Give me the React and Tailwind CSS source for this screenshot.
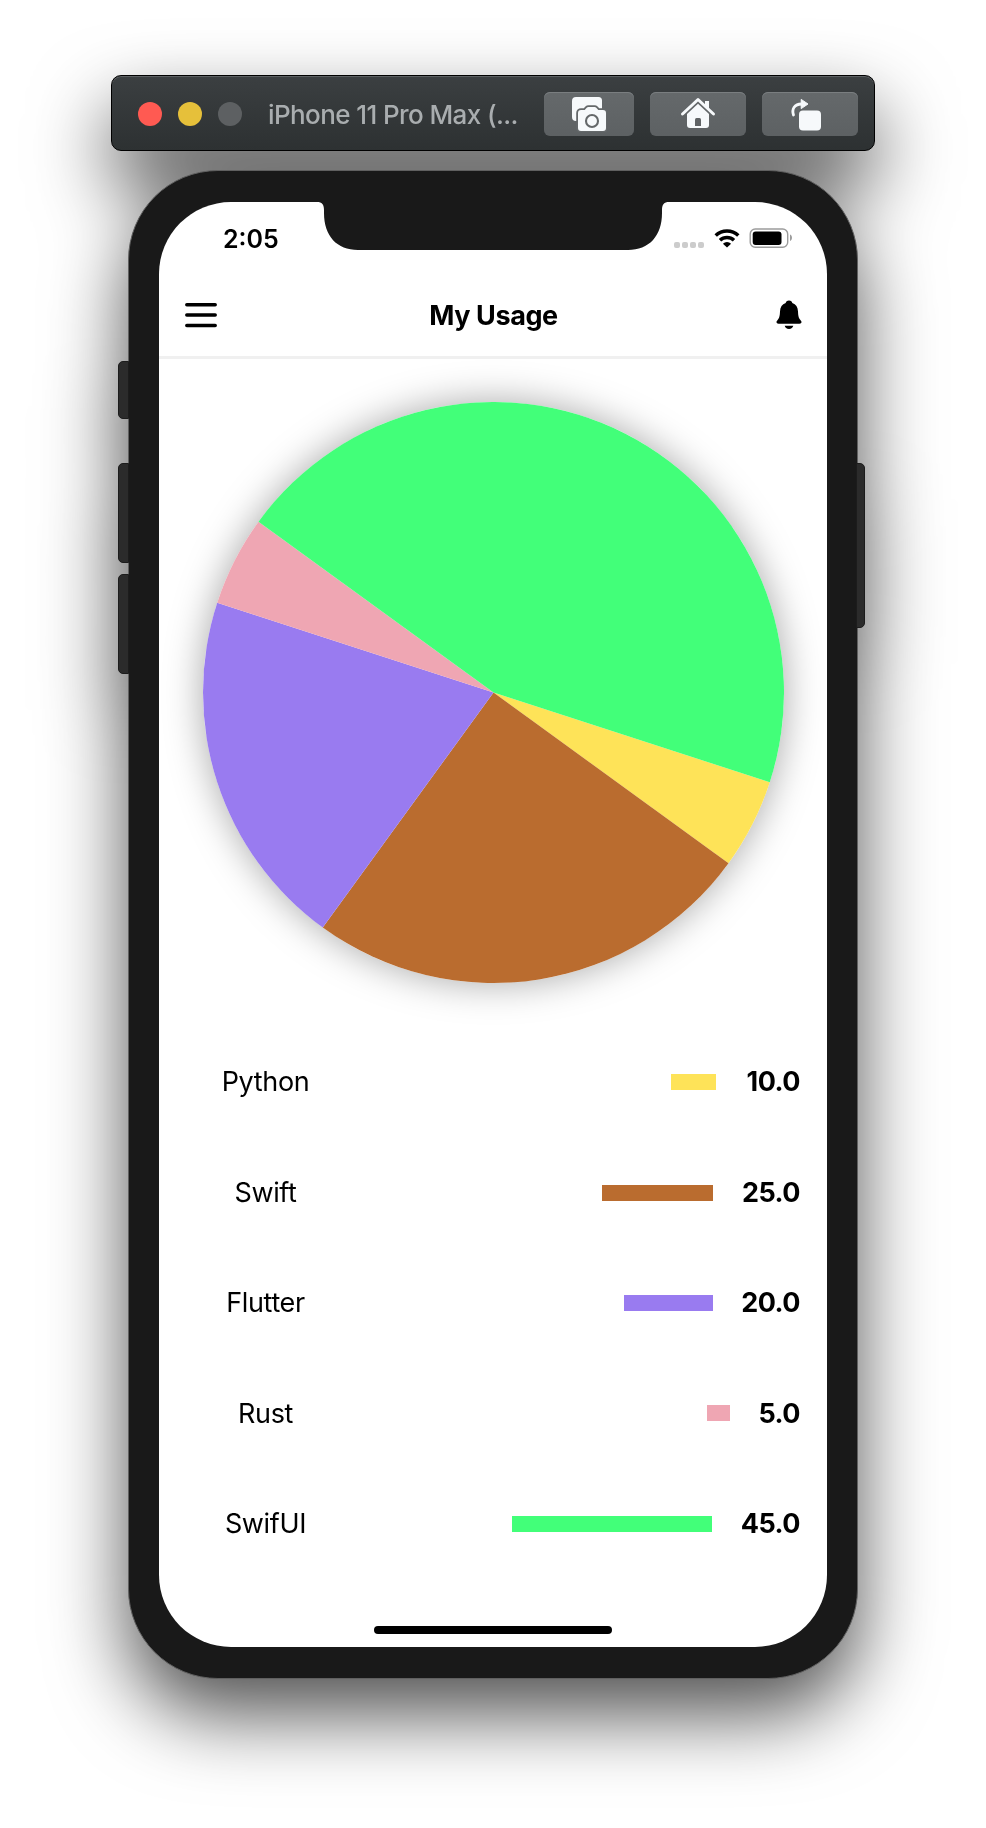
const USAGE = [
  { name: 'Python', value: '10.0', percent: 10, slot: 'w-[54px]', fill: '#fee358' },
  { name: 'Swift', value: '25.0', percent: 25, slot: 'w-[57px]', fill: '#ba6c2f' },
  { name: 'Flutter', value: '20.0', percent: 20, slot: 'w-[57px]', fill: '#997bf0' },
  { name: 'Rust', value: '5.0', percent: 5, slot: 'w-[40px]', fill: '#efa6b3' },
  { name: 'SwifUI', value: '45.0', percent: 45, slot: 'w-[58px]', fill: '#42ff79' },
];

// Slice boundaries in degrees, clockwise from the positive x axis.
const SLICES = [
  { fill: '#fee358', from: 18, to: 36 },
  { fill: '#ba6c2f', from: 36, to: 126 },
  { fill: '#997bf0', from: 126, to: 198 },
  { fill: '#efa6b3', from: 198, to: 216 },
  { fill: '#42ff79', from: 216, to: 378 },
];

const R = 290.5;

function slicePath(from, to) {
  const point = (deg) => {
    const a = (deg * Math.PI) / 180;
    return `${R + R * Math.cos(a)} ${R + R * Math.sin(a)}`;
  };
  return `M${R} ${R} L${point(from)} A${R} ${R} 0 ${to - from > 180 ? 1 : 0} 1 ${point(to)} Z`;
}

function CameraIcon() {
  return (
    <svg width="36" height="36" viewBox="0 0 36 36">
      <path d="M5 1h22.500a3.500 3.500 0 0 1 3.500 3.500V16H10v9H5a4 4 0 0 1-4-4V5a4 4 0 0 1 4-4Z" fill="#f6f9fb" />
      <path
        d="M10 14h3.700l2-2.300c.5-.5 1-.7 1.700-.7h6.200c.7 0 1.200.2 1.700.7l2 2.300H32a3 3 0 0 1 3 3V32a3 3 0 0 1-3 3H10a3 3 0 0 1-3-3V17a3 3 0 0 1 3-3Z"
        fill="#f6f9fb"
        stroke="#64686a"
        strokeWidth="3.600"
        paintOrder="stroke"
      />
      <circle cx="21" cy="25" r="6" fill="none" stroke="#64686a" strokeWidth="2.100" />
    </svg>
  );
}

function HomeIcon() {
  return (
    <svg width="36" height="36" viewBox="0 0 36 36" className="-mt-px">
      <path d="M25 5h4v10l-4-4Z" fill="#f6f9fb" />
      <path d="m2.500 18 15.500-14.500L33.500 18" fill="none" stroke="#f6f9fb" strokeWidth="3" strokeLinecap="round" strokeLinejoin="round" />
      <path d="M18 7.800 29 18v11a3 3 0 0 1-3 3H10a3 3 0 0 1-3-3V18Z" fill="#f6f9fb" />
      <path d="M15 30v-6.500a1.500 1.500 0 0 1 1.500-1.500h3a1.500 1.500 0 0 1 1.500 1.500V30Z" fill="#5f6365" />
    </svg>
  );
}

function RotateIcon() {
  return (
    <svg width="36" height="36" viewBox="0 0 36 36" className="-ml-[13px]">
      <path d="M7.500 19C5.500 13 8.500 8 15.500 8" fill="none" stroke="#f6f9fb" strokeWidth="2.800" strokeLinecap="round" />
      <path d="M15.200 3.400 22 8l-6.800 4.600Z" fill="#f6f9fb" stroke="#f6f9fb" strokeLinejoin="round" />
      <rect x="13" y="14.500" width="22" height="20" rx="4" fill="#f6f9fb" />
    </svg>
  );
}

function WifiIcon() {
  return (
    <svg width="26" height="20" viewBox="0 0 26 20">
      <path d="M1.700 7.500a16.300 16.300 0 0 1 22.600 0" fill="none" stroke="#000" strokeWidth="3.500" />
      <path d="M6 12.200a10.200 10.200 0 0 1 14 0" fill="none" stroke="#000" strokeWidth="3.500" />
      <path d="M13 19.500 8.900 15.700a6 6 0 0 1 8.200 0Z" fill="#000" />
    </svg>
  );
}

function BatteryIcon() {
  return (
    <svg width="44" height="20" viewBox="0 0 44 20">
      <rect x="1.200" y="1" width="37.500" height="18.300" rx="5" fill="none" stroke="#9c9c9c" strokeWidth="1.400" />
      <rect x="3.700" y="3.400" width="28.800" height="13.500" rx="3" fill="#000" />
      <path d="M41 6.500c1.300.5 2 1.800 2 3.300s-.7 2.800-2 3.300Z" fill="#9c9c9c" />
    </svg>
  );
}

function BellIcon() {
  return (
    <svg width="26" height="30" viewBox="0 0 26 30">
      <path
        d="M13 .5c2 0 3 1.100 3.300 2.600 3.700 1.200 5.500 4.200 5.700 8.400.2 4.500.6 6.300 2.200 8.300.8 1 1.300 1.600 1.300 2.300 0 1.100-.8 1.700-2 1.700H2.500c-1.200 0-2-.6-2-1.700 0-.7.5-1.300 1.300-2.300 1.600-2 2-3.800 2.200-8.300.2-4.200 2-7.200 5.700-8.400C10 1.600 11 .5 13 .5Z"
        fill="#000"
      />
      <path d="M8.700 25.700h8.600c-.4 2-2 3.200-4.300 3.200s-3.900-1.200-4.300-3.200Z" fill="#000" />
    </svg>
  );
}

function MenuIcon() {
  return (
    <svg width="32" height="26" viewBox="0 0 32 26" stroke="#000" strokeWidth="3.500" strokeLinecap="round">
      <path d="M1.800 2.700h28.400M1.800 13h28.400M1.800 23.400h28.400" />
    </svg>
  );
}

const TOOL_BUTTON =
  'flex h-11 items-center justify-center rounded-md bg-gradient-to-b from-[#65696b] to-[#5d6163] shadow-[inset_0_1px_0_#7a7e80]';

function TitleBar() {
  return (
    <div className="flex h-[76px] w-[764px] items-center rounded-[10px] border border-black bg-gradient-to-b from-[#3b3f41] to-[#2d3132] pt-0.5 pr-4 pl-[26px] shadow-[inset_0_1px_0_#5c6062]">
      <div className="flex gap-4">
        <span className="size-6 rounded-full bg-[#ff5a52]" />
        <span className="size-6 rounded-full bg-[#e6c03a]" />
        <span className="size-6 rounded-full bg-[#5d6062]" />
      </div>
      <span className="ml-[26px] w-[276px] text-[26px] font-[450] tracking-[-0.6px] whitespace-nowrap text-[#a9adaf]">
        iPhone 11 Pro Max (...
      </span>
      <div className="flex gap-4">
        <div className={`${TOOL_BUTTON} w-[90px]`}>
          <CameraIcon />
        </div>
        <div className={`${TOOL_BUTTON} w-24`}>
          <HomeIcon />
        </div>
        <div className={`${TOOL_BUTTON} w-24`}>
          <RotateIcon />
        </div>
      </div>
    </div>
  );
}

function StatusBar() {
  return (
    <div className="flex h-[72px] items-center pr-[34px] pl-[64px]">
      <span className="mt-0.5 text-[25px] leading-none font-semibold">2:05</span>
      <div className="ml-auto flex items-center">
        <div className="mt-[13px] mr-[10px] flex gap-0.5">
          <span className="size-1.5 rounded-[2px] bg-[#cccccc]" />
          <span className="size-1.5 rounded-[2px] bg-[#cccccc]" />
          <span className="size-1.5 rounded-[2px] bg-[#cccccc]" />
          <span className="size-1.5 rounded-[2px] bg-[#cccccc]" />
        </div>
        <WifiIcon />
        <span className="w-[9px]" />
        <BatteryIcon />
      </div>
    </div>
  );
}

function Notch() {
  return (
    <svg className="absolute top-[-1px] left-1/2 -translate-x-1/2" width="356" height="49" viewBox="0 0 356 49">
      <path d="M0 0h356v1h-2c-5 0-7 2.500-7 8v3c0 23-13 37-34 37H43C22 49 9 35 9 12V9c0-5.500-2-8-7-8H0Z" fill="#191919" />
    </svg>
  );
}

function PieChart() {
  return (
    <div className="size-[581px] rounded-full shadow-[0_0_38px_rgba(0,0,0,0.35)]">
      <svg width="581" height="581" viewBox="0 0 581 581">
        {SLICES.map((s) => (
          <path key={s.fill} d={slicePath(s.from, s.to)} fill={s.fill} />
        ))}
      </svg>
    </div>
  );
}

function UsageRow({ item }) {
  return (
    <div className="flex h-[110.4px] items-center pr-[27px] pl-[52px]">
      <span className="w-[109px] pt-px text-center text-[27px] tracking-[-0.35px]">{item.name}</span>
      <span className="ml-auto h-4" style={{ width: item.percent * 4.43, background: item.fill }} />
      <span className={`${item.slot} ml-[30.500px] flex justify-end pt-px text-[27px] font-bold tracking-[-0.5px]`}>{item.value}</span>
    </div>
  );
}

function Phone() {
  return (
    <div className="relative mt-[19px]">
      <div className="relative rounded-[90px] border border-[#606060] bg-[#191919] px-[30px] pt-[31px] pb-[31px]">
        <div className="relative flex h-[1445px] w-[668px] flex-col overflow-hidden rounded-[72px] bg-white">
          <Notch />
          <StatusBar />
          <header className="grid h-[85px] shrink-0 grid-cols-[1fr_auto_1fr] items-center border-b-[3px] border-[#f0f0f0] pr-[25px] pl-[26px]">
            <MenuIcon />
            <h1 className="text-[27px] leading-none font-bold tracking-[-0.4px]">My Usage</h1>
            <span className="justify-self-end">
              <BellIcon />
            </span>
          </header>
          <div className="flex justify-center pt-[43px]">
            <PieChart />
          </div>
          <div className="flex flex-col pt-[44px]">
            {USAGE.map((item) => (
              <UsageRow key={item.name} item={item} />
            ))}
          </div>
          <div className="mt-auto mb-[13px] h-2 w-[238px] self-center rounded-full bg-black" />
        </div>
      </div>
      <span className="absolute top-[191px] -left-[10px] h-[58px] w-[11px] rounded-l-[5px] border border-[#1c1c1c] bg-[#2b2b2b]" />
      <span className="absolute top-[293px] -left-[10px] h-[100px] w-[11px] rounded-l-[5px] border border-[#1c1c1c] bg-[#2b2b2b]" />
      <span className="absolute top-[404px] -left-[10px] h-[100px] w-[11px] rounded-l-[5px] border border-[#1c1c1c] bg-[#2b2b2b]" />
      <span className="absolute top-[293px] -right-[7px] h-[165px] w-[9px] rounded-r-[5px] border border-[#1c1c1c] bg-[#2b2b2b]" />
    </div>
  );
}

export default function App() {
  return (
    <div className="flex h-[1828px] w-[986px] flex-col overflow-hidden bg-white font-['Inter',sans-serif] text-black">
      <div className="flex flex-col items-center pt-[75px] drop-shadow-[0_36px_39px_rgba(0,0,0,0.68)]">
        <TitleBar />
        <Phone />
      </div>
    </div>
  );
}
